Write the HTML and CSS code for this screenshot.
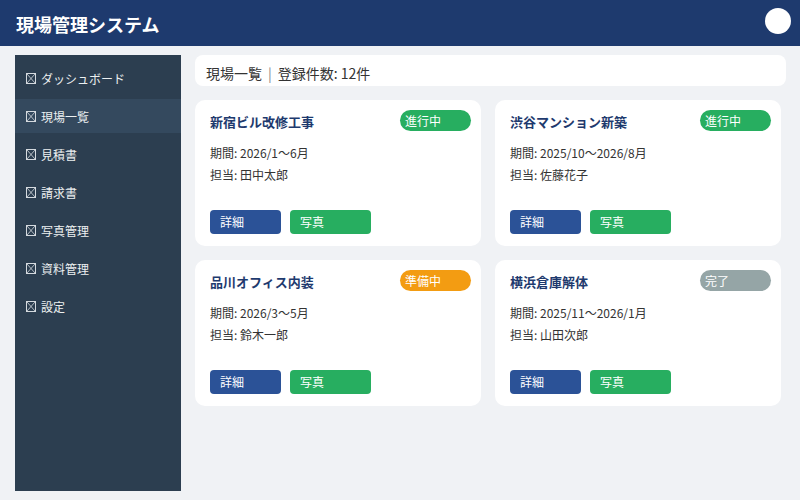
FILE: index.html
```html
<!DOCTYPE html>
<html lang="ja">
<head>
<meta charset="utf-8">
<link rel="stylesheet" href="styles.css">
</head>
<body>
<header class="header">
  <h1 class="title">現場管理システム</h1>
  <div class="avatar"></div>
</header>
<div class="layout">
  <nav class="sidebar">
    <div class="nav-item"><svg class="ico" viewBox="0 0 10 11"><rect x="0.5" y="0.5" width="9" height="10" fill="none" stroke="currentColor"/><path d="M1 1L9 10M9 1L1 10" stroke="currentColor" stroke-width="0.8"/></svg>ダッシュボード</div>
    <div class="nav-item active"><svg class="ico" viewBox="0 0 10 11"><rect x="0.5" y="0.5" width="9" height="10" fill="none" stroke="currentColor"/><path d="M1 1L9 10M9 1L1 10" stroke="currentColor" stroke-width="0.8"/></svg>現場一覧</div>
    <div class="nav-item"><svg class="ico" viewBox="0 0 10 11"><rect x="0.5" y="0.5" width="9" height="10" fill="none" stroke="currentColor"/><path d="M1 1L9 10M9 1L1 10" stroke="currentColor" stroke-width="0.8"/></svg>見積書</div>
    <div class="nav-item"><svg class="ico" viewBox="0 0 10 11"><rect x="0.5" y="0.5" width="9" height="10" fill="none" stroke="currentColor"/><path d="M1 1L9 10M9 1L1 10" stroke="currentColor" stroke-width="0.8"/></svg>請求書</div>
    <div class="nav-item"><svg class="ico" viewBox="0 0 10 11"><rect x="0.5" y="0.5" width="9" height="10" fill="none" stroke="currentColor"/><path d="M1 1L9 10M9 1L1 10" stroke="currentColor" stroke-width="0.8"/></svg>写真管理</div>
    <div class="nav-item"><svg class="ico" viewBox="0 0 10 11"><rect x="0.5" y="0.5" width="9" height="10" fill="none" stroke="currentColor"/><path d="M1 1L9 10M9 1L1 10" stroke="currentColor" stroke-width="0.8"/></svg>資料管理</div>
    <div class="nav-item"><svg class="ico" viewBox="0 0 10 11"><rect x="0.5" y="0.5" width="9" height="10" fill="none" stroke="currentColor"/><path d="M1 1L9 10M9 1L1 10" stroke="currentColor" stroke-width="0.8"/></svg>設定</div>
  </nav>
  <main class="main">
    <div class="topbar">現場一覧<span class="sep">|</span>登録件数: 12件</div>
    <div class="grid">
      <div class="card">
        <span class="badge green">進行中</span>
        <div class="card-title">新宿ビル改修工事</div>
        <div class="info">期間: 2026/1～6月</div>
        <div class="info">担当: 田中太郎</div>
        <div class="actions"><span class="btn blue">詳細</span><span class="btn green wide">写真</span></div>
      </div>
      <div class="card">
        <span class="badge green">進行中</span>
        <div class="card-title">渋谷マンション新築</div>
        <div class="info">期間: 2025/10～2026/8月</div>
        <div class="info">担当: 佐藤花子</div>
        <div class="actions"><span class="btn blue">詳細</span><span class="btn green wide">写真</span></div>
      </div>
      <div class="card">
        <span class="badge orange">準備中</span>
        <div class="card-title">品川オフィス内装</div>
        <div class="info">期間: 2026/3～5月</div>
        <div class="info">担当: 鈴木一郎</div>
        <div class="actions"><span class="btn blue">詳細</span><span class="btn green wide">写真</span></div>
      </div>
      <div class="card">
        <span class="badge gray">完了</span>
        <div class="card-title">横浜倉庫解体</div>
        <div class="info">期間: 2025/11～2026/1月</div>
        <div class="info">担当: 山田次郎</div>
        <div class="actions"><span class="btn blue">詳細</span><span class="btn green wide">写真</span></div>
      </div>
    </div>
  </main>
</div>
</body>
</html>
```
FILE: styles.css
```css
* { box-sizing: border-box; }
html, body { margin: 0; padding: 0; }
body {
  width: 800px;
  height: 500px;
  overflow: hidden;
  background: #f0f2f5;
  font-family: "Noto Sans CJK JP", "Noto Sans", sans-serif;
  color: #333;
}
.header {
  height: 46px;
  background: #1e3a6e;
  display: flex;
  align-items: center;
  justify-content: space-between;
  padding: 0 9px 0 16px;
}
.title {
  margin: 0;
  font-size: 18px;
  font-weight: 700;
  color: #fff;
  line-height: 1;
  padding-top: 2px;
}
.avatar {
  width: 26px;
  height: 26px;
  border-radius: 50%;
  background: #fff;
  margin-top: -5px;
}
.layout {
  display: flex;
  padding: 9px 14px 9px 15px;
  gap: 14px;
  height: 454px;
}
.sidebar {
  width: 166px;
  flex: none;
  background: #2c3e50;
  padding: 6px 0;
  display: flex;
  flex-direction: column;
  gap: 4px;
}
.nav-item {
  height: 34px;
  display: flex;
  align-items: center;
  padding-left: 11px;
  font-size: 12px;
  color: #ecf0f1;
}
.nav-item.active { background: #34495e; }
.ico {
  width: 10px;
  height: 11px;
  margin-right: 5px;
  color: #d5dadf;
  flex: none;
}
.main {
  flex: 1;
  display: flex;
  flex-direction: column;
  gap: 14px;
}
.topbar {
  height: 31px;
  background: #fff;
  border-radius: 8px;
  padding: 4px 11px 0;
  display: flex;
  align-items: center;
  font-size: 14px;
  color: #333;
}
.sep { color: #888; margin: 0 6px 0 6px; }
.grid {
  display: grid;
  grid-template-columns: repeat(2, 286px);
  gap: 14px;
}
.card {
  position: relative;
  background: #fff;
  border-radius: 10px;
  height: 146px;
  padding: 12px 15px 12px;
  display: flex;
  flex-direction: column;
}
.card-title {
  font-size: 13px;
  font-weight: 700;
  color: #1e3a6e;
  line-height: 20px;
  margin-bottom: 10px;
}
.info {
  font-size: 12px;
  line-height: 22px;
  color: #333;
}
.badge {
  position: absolute;
  top: 10px;
  right: 10px;
  width: 71px;
  height: 21px;
  border-radius: 11px;
  color: #fff;
  font-size: 12px;
  line-height: 21px;
  padding-left: 5px;
}
.green { background: #27ae60; }
.orange { background: #f39c12; }
.gray { background: #95a5a6; }
.blue { background: #2b5297; }
.actions {
  margin-top: auto;
  display: flex;
  gap: 9px;
}
.btn {
  width: 71px;
  height: 24px;
  border-radius: 4px;
  color: #fff;
  font-size: 12px;
  line-height: 24px;
  padding-left: 10px;
}
.btn.wide { width: 81px; }
```
